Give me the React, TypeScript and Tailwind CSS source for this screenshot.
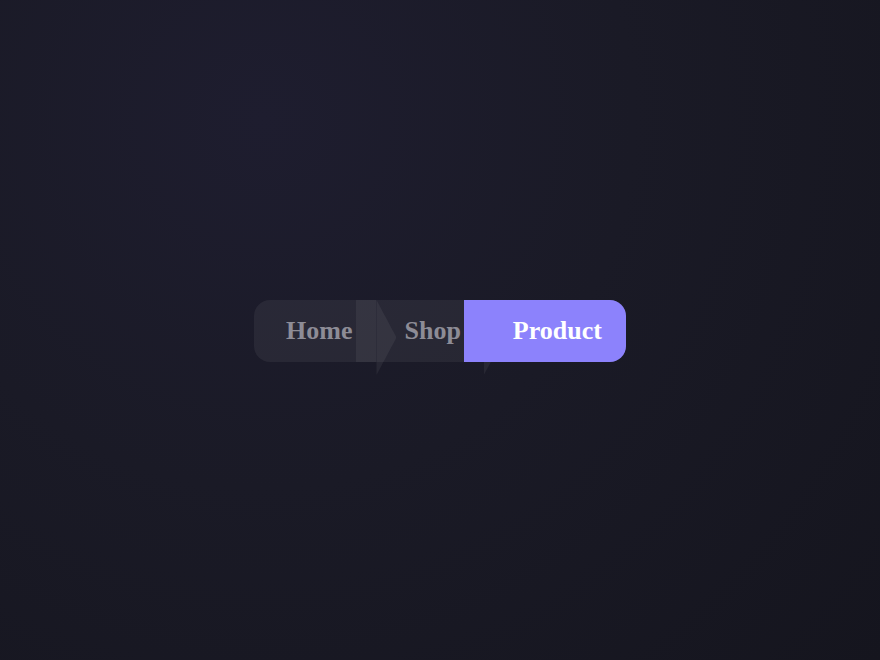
import React from 'react';

const crumbFont = { fontFamily: '"Liberation Serif", "Times New Roman", serif' };

// Separator: a lighter strip with a pointed tail that hangs past the bar
const Separator: React.FC = () => (
  <div className="relative h-full w-5 shrink-0 bg-white/[0.06]">
    <div className="absolute left-full top-0 h-[75px] w-5 bg-white/[0.06] [clip-path:polygon(0_0,100%_50%,0_100%)]" />
  </div>
);

const App: React.FC = () => {
  return (
    <div className="flex h-[660px] w-full items-center justify-center pt-[2px] bg-[radial-gradient(circle_at_30%_18%,#1e1d2f_0%,#1a1a26_45%,#15151e_100%)]">
      <nav
        className="flex h-[62px] items-stretch rounded-2xl bg-white/[0.06] text-[26px] font-bold leading-none"
        style={crumbFont}
      >
        <div className="flex items-center pl-8 pr-1 text-[#8d8c96]">Home</div>
        <Separator />
        <div className="flex items-center pl-7 pr-[3px] text-[#8d8c96]">Shop</div>
        <Separator />
        <div className="relative z-10 -ml-5 flex items-center rounded-r-2xl bg-[#8c82fc] pl-[49px] pr-6 text-white">
          Product
        </div>
      </nav>
    </div>
  );
};

export default App;
